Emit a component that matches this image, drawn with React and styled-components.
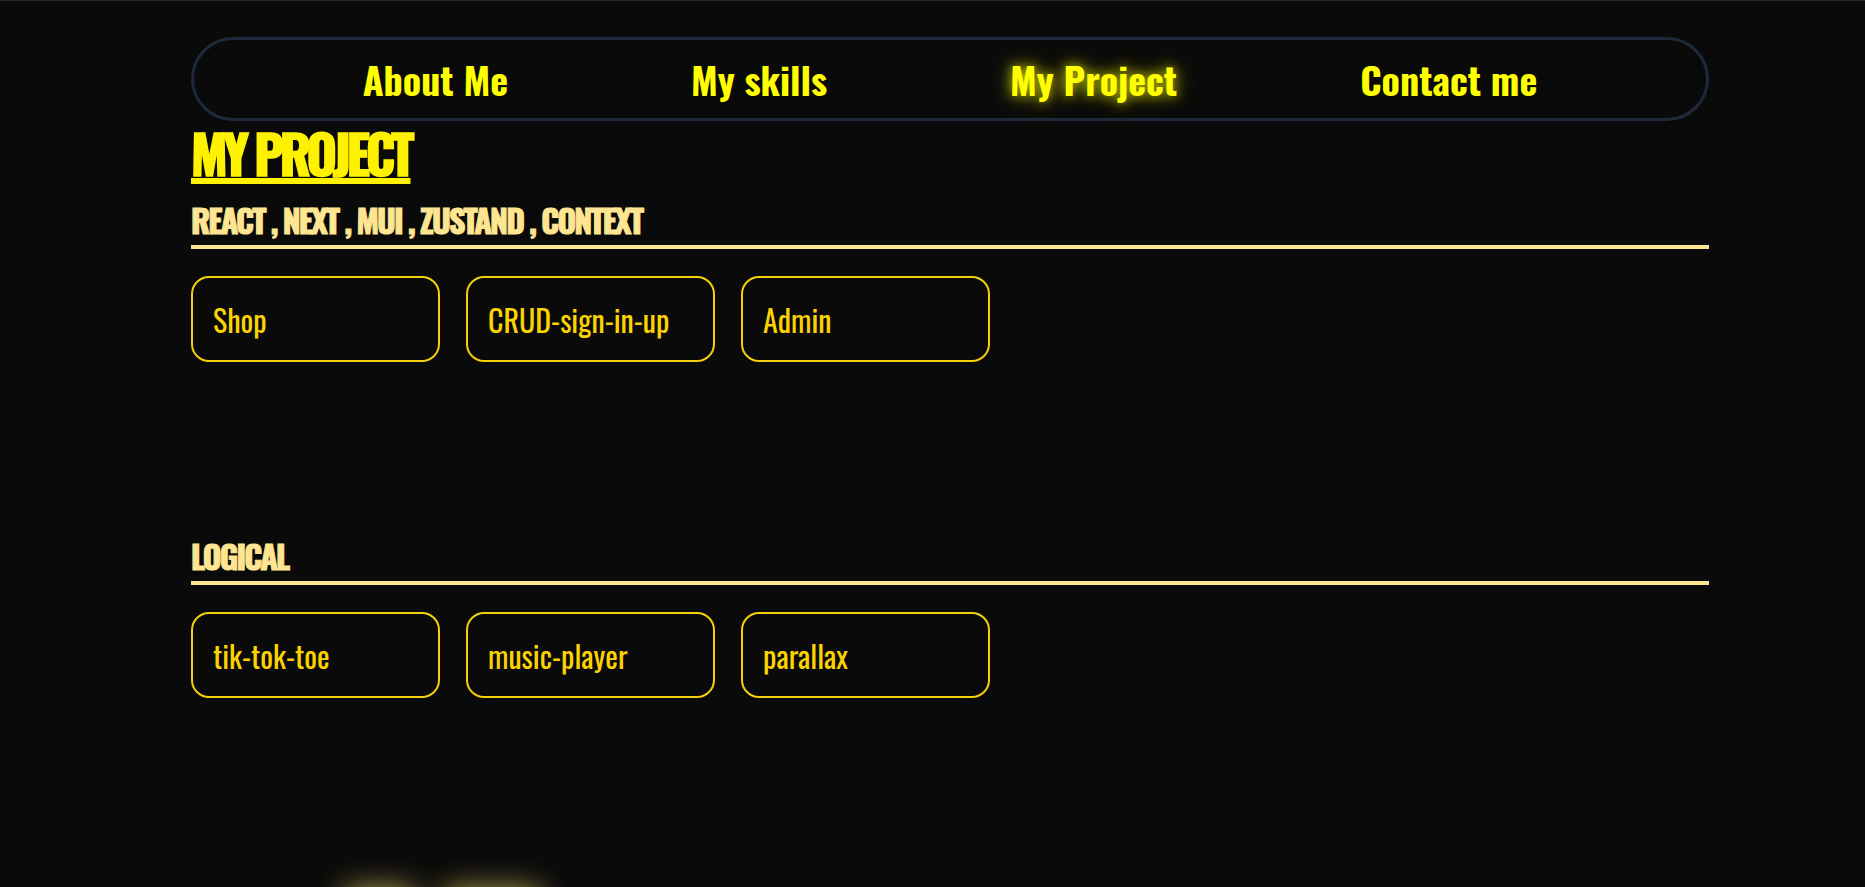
import React from 'react';
import styled, { createGlobalStyle } from 'styled-components';

const GlobalStyle = createGlobalStyle`
  html, body {
    margin: 0;
    padding: 0;
    background: #0a0a0a;
    overflow: hidden;
  }
  body {
    font-family: "Oswald", "Noto Sans ExtraCondensed", "Noto Sans Condensed", "Roboto Condensed", "Noto Sans", sans-serif;
    font-stretch: extra-condensed;
    border-top: 1px solid #1b2a22;
  }
`;

const sections = [
  { title: 'REACT , NEXT , MUI , ZUSTAND , CONTEXT', projects: ['Shop', 'CRUD-sign-in-up', 'Admin'] },
  { title: 'LOGICAL', projects: ['tik-tok-toe', 'music-player', 'parallax'] },
];

const navItems = ['About Me', 'My skills', 'My Project', 'Contact me'];

const App = () => {
  return (
    <>
      <GlobalStyle />
      <Page>
        <Nav>
          {navItems.map((item) => (
            <NavLink key={item} $active={item === 'My Project'}>
              {item}
            </NavLink>
          ))}
        </Nav>

        <Title>MY PROJECT</Title>

        {sections.map((section) => (
          <Section key={section.title}>
            <SectionTitle>{section.title}</SectionTitle>
            <CardRow>
              {section.projects.map((p) => (
                <Card key={p}>{p}</Card>
              ))}
            </CardRow>
          </Section>
        ))}

        {/* next block, just under the fold */}
        <GlowRow>
          <GlowBox $w={70} />
          <GlowBox $w={95} />
        </GlowRow>
      </Page>
    </>
  );
};

const Page = styled.div`
  padding: 36px 156px 0 191px;
  height: 886px;
  box-sizing: border-box;
  overflow: hidden;
`;

const Nav = styled.nav`
  height: 84px;
  box-sizing: border-box;
  border: 3px solid #1e293b;
  border-radius: 42px;
  display: flex;
  align-items: center;
  justify-content: center;
  gap: 183px;
`;

const NavLink = styled.a`
  font-size: 38px;
  font-weight: 700;
  color: #ffff00;
  cursor: pointer;
  text-shadow: ${({ $active }) =>
    $active ? '0 0 12px rgba(255, 255, 0, 0.7), 0 0 22px rgba(255, 255, 0, 0.45)' : 'none'};
`;

const Title = styled.h1`
  margin: 2px 0 0;
  font-size: 52px;
  line-height: 60px;
  font-weight: 700;
  letter-spacing: -4px;
  color: #fff200;
  -webkit-text-stroke: 1.5px #fff200;
  text-decoration: underline;
  text-decoration-thickness: 6px;
  text-underline-offset: 2px;
`;

const Section = styled.section`
  margin-top: 18px;
  margin-bottom: 175px;
`;

const SectionTitle = styled.h2`
  margin: 0;
  padding-bottom: 6px;
  font-size: 32px;
  line-height: 38px;
  font-weight: 700;
  letter-spacing: -1.9px;
  color: #fee591;
  -webkit-text-stroke: 1px #fee591;
  border-bottom: 4px solid #fee591;
`;

const CardRow = styled.div`
  display: flex;
  gap: 26px;
  margin-top: 27px;
`;

const Card = styled.div`
  width: 249px;
  height: 86px;
  box-sizing: border-box;
  border: 2px solid #f5cf0a;
  border-radius: 18px;
  padding-left: 20px;
  display: flex;
  align-items: center;
  font-size: 30px;
  color: #fbd300;
`;

const GlowRow = styled.div`
  display: flex;
  gap: 30px;
  margin-left: 154px;
  margin-top: 191px;
`;

const GlowBox = styled.div`
  width: ${({ $w }) => $w}px;
  height: 40px;
  background: #0a0a0a;
  box-shadow: 0 0 30px rgba(255, 230, 110, 0.7);
`;

export default App;
